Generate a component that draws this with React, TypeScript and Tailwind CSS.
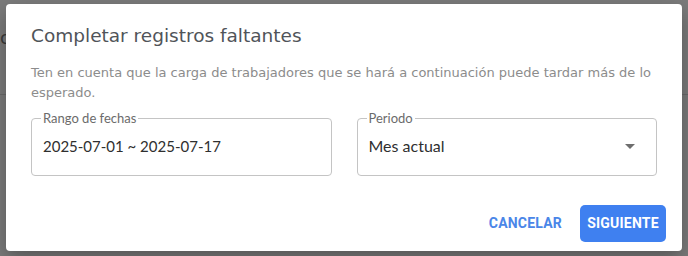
import React from 'react';

const FieldBox = ({ label, children }: { label: string; children: React.ReactNode }) => (
  <fieldset className="relative flex-1 h-[64px] border border-[#c4c4c4] rounded-[4px] px-[11px] m-0 min-w-0">
    <legend className="px-[2px] ml-[-2px] text-[13px] leading-[12px] text-[#6b6b6b]" style={{ fontFamily: 'Lato, sans-serif' }}>
      {label}
    </legend>
    <div
      className="flex items-center justify-between h-[44px] text-[#2f2f2f]"
      style={{ fontFamily: 'Lato, sans-serif' }}
    >
      {children}
    </div>
  </fieldset>
);

export default function App() {
  return (
    <div
      className="w-[688px] h-[256px] bg-[#7b7b7b] relative overflow-hidden"
      style={{ fontFamily: '"DejaVu Sans", sans-serif' }}
    >
      {/* faint page behind the backdrop */}
      <div className="absolute left-0 top-[94px] w-full h-px bg-[#6a6a6a]" />
      <div className="absolute left-0 top-[24px] text-[18px] text-[#3a3a3a]">c</div>

      <div className="absolute left-[6px] top-[4px] w-[676px] h-[247px] bg-white rounded-[4px] shadow-[0_8px_20px_rgba(0,0,0,0.3)] px-[25px] pt-[19px]">
        <h2 className="text-[18.5px] leading-[26px] text-[#505459]">Completar registros faltantes</h2>
        <p className="mt-[14px] text-[13px] leading-[20px] text-[#8c8c8c] whitespace-nowrap">
          Ten en cuenta que la carga de trabajadores que se hará a continuación puede tardar más de lo
          <br />
          esperado.
        </p>
        <div className="flex gap-[25px] mt-[9px]">
          <FieldBox label="Rango de fechas">
            <span className="text-[15px]">2025-07-01 ~ 2025-07-17</span>
          </FieldBox>
          <FieldBox label="Periodo">
            <span className="text-[16px]">Mes actual</span>
            <svg width="10" height="5" viewBox="0 0 10 5" className="mr-[10px]">
              <path d="M0 0 L10 0 L5 5 Z" fill="#6e6e6e" />
            </svg>
          </FieldBox>
        </div>
        <div className="flex justify-end items-center gap-[10px] mt-[29px] -mr-[9px]" style={{ fontFamily: 'Roboto, sans-serif' }}>
          <button className="h-[37px] px-[8px] text-[14px] font-bold text-[#4a86e8] tracking-[0.2px]">CANCELAR</button>
          <button className="h-[37px] w-[86px] rounded-[5px] bg-[#3f80f0] text-[14px] font-bold text-white tracking-[0.2px]">SIGUIENTE</button>
        </div>
      </div>
    </div>
  );
}
